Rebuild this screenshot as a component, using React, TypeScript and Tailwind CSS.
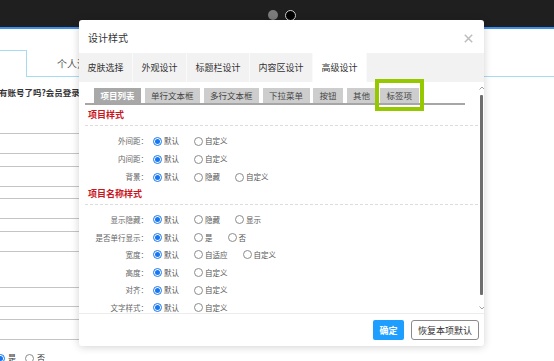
import type { ReactElement } from "react";

type Row = { label: string; opts: string[] };

const ITEM_ROWS: Row[] = [
  { label: "外间距：", opts: ["默认", "自定义"] },
  { label: "内间距：", opts: ["默认", "自定义"] },
  { label: "背景：", opts: ["默认", "隐藏", "自定义"] },
];

const NAME_ROWS: Row[] = [
  { label: "显示隐藏：", opts: ["默认", "隐藏", "显示"] },
  { label: "是否单行显示：", opts: ["默认", "是", "否"] },
  { label: "宽度：", opts: ["默认", "自适应", "自定义"] },
  { label: "高度：", opts: ["默认", "自定义"] },
  { label: "对齐：", opts: ["默认", "自定义"] },
  { label: "文字样式：", opts: ["默认", "自定义"] },
];

const TABS = [
  { name: "皮肤选择", w: "w-[54px]" },
  { name: "外观设计", w: "w-[54px]" },
  { name: "标题栏设计", w: "w-[63px]" },
  { name: "内容区设计", w: "w-[63px]" },
  { name: "高级设计", w: "w-[54px]", active: true },
];

const SUB_TABS = ["项目列表", "单行文本框", "多行文本框", "下拉菜单", "按钮", "其他", "标签项"];

function Radio({ on }: { on?: boolean }): ReactElement {
  if (on) {
    return (
      <span className="flex h-[9px] w-[9px] shrink-0 items-center justify-center rounded-full border border-[#1677f2] bg-white">
        <span className="h-[5px] w-[5px] rounded-full bg-[#1677f2]" />
      </span>
    );
  }
  return <span className="block h-[9px] w-[9px] shrink-0 rounded-full border border-[#8c8c8c] bg-white" />;
}

function OptionRow({ row, tall }: { row: Row; tall?: boolean }): ReactElement {
  return (
    <div className={`flex items-center ${tall ? "h-[18px]" : "h-[17.6px]"}`}>
      <span className="w-[69px] text-right text-[7.5px] leading-none text-[#666]">{row.label}</span>
      <div className="ml-[5px] flex items-center">
        {row.opts.map((o, i) => (
          <span key={o} className="mr-[15px] flex items-center">
            <Radio on={i === 0} />
            <span className="ml-[2px] text-[7.5px] leading-none text-[#555]">{o}</span>
          </span>
        ))}
      </div>
    </div>
  );
}

function SectionTitle({ text }: { text: string }): ReactElement {
  return (
    <div className="mx-[6px] border-b border-dashed border-[#dcdcdc] pb-[4px] pl-[3px]">
      <span className="block text-[9px] font-bold leading-[12px] text-[#c9151e]">{text}</span>
    </div>
  );
}

function Chevron({ up }: { up?: boolean }): ReactElement {
  return (
    <svg width="6" height="4" viewBox="0 0 6 4" className="mx-auto">
      <polyline
        points={up ? "0.5,3.5 3,1 5.5,3.5" : "0.5,0.5 3,3 5.5,0.5"}
        fill="none"
        stroke="#a0a0a0"
        strokeWidth="1"
      />
    </svg>
  );
}

function Modal(): ReactElement {
  return (
    <div className="absolute left-[79px] top-[20px] flex h-[326px] w-[405px] flex-col overflow-hidden rounded-[3px] bg-white shadow-[0_1px_8px_rgba(0,0,0,0.18)]">
      {/* header */}
      <div className="flex h-[33px] items-center justify-between pl-[9px] pr-[11px] pt-[3px]">
        <span className="text-[10px] leading-none text-[#333]">设计样式</span>
        <svg width="9" height="9" viewBox="0 0 9 9">
          <path d="M0.8 0.8 L8.2 8.2 M8.2 0.8 L0.8 8.2" stroke="#bdbdbd" strokeWidth="1.5" />
        </svg>
      </div>

      {/* main tabs */}
      <div className="flex h-[29px] bg-[#f2f2f2]">
        {TABS.map((t) => (
          <div
            key={t.name}
            className={`flex h-full items-center justify-center border-r border-[#fafafa] text-[9px] text-[#333] ${t.w} ${t.active ? "bg-white" : ""}`}
          >
            {t.name}
          </div>
        ))}
      </div>

      {/* body */}
      <div className="relative h-[231px] overflow-hidden">
        <div className="ml-[6px] mt-[6px] flex w-[380px] gap-[3.5px] border-b-2 border-[#a6a6a6] pl-[9px]">
          {SUB_TABS.map((s, i) => (
            <span
              key={s}
              className={`flex h-[15px] items-center whitespace-nowrap px-[6.5px] text-[8.5px] leading-none ${i === 0 ? "bg-[#a8a8a8] font-bold text-white" : "bg-[#cdcdcd] text-[#444]"}`}
            >
              {s}
            </span>
          ))}
        </div>

        <div className="mt-[4px]">
          <SectionTitle text="项目样式" />
          <div className="mt-[6px]">
            {ITEM_ROWS.map((r) => (
              <OptionRow key={r.label} row={r} tall />
            ))}
          </div>
        </div>

        <div className="mt-[2px]">
          <SectionTitle text="项目名称样式" />
          <div className="mt-[6px]">
            {NAME_ROWS.map((r) => (
              <OptionRow key={r.label} row={r} />
            ))}
          </div>
        </div>

        {/* scrollbar */}
        <div className="absolute bottom-[3px] right-0 top-[4px] flex w-[5px] flex-col">
          <Chevron up />
          <div className="mx-auto mt-[5px] h-[200px] w-[3.5px] rounded-[1px] bg-[#6e6e6e]" />
          <div className="mt-auto">
            <Chevron />
          </div>
        </div>
      </div>

      {/* footer */}
      <div className="flex flex-1 items-center justify-end gap-[7px] border-t border-[#ececec] pr-[5px]">
        <span className="flex h-[20px] items-center rounded-[2px] bg-[#1e9fff] px-[6.5px] text-[9px] font-bold leading-none text-white">
          确定
        </span>
        <span className="flex h-[20px] items-center rounded-[3px] border border-[#8a8a8a] px-[6px] text-[9px] leading-none text-[#333]">
          恢复本项默认
        </span>
      </div>
    </div>
  );
}

export default function App(): ReactElement {
  return (
    <div className="relative h-[361px] w-[554px] overflow-hidden bg-white font-['Noto_Sans_CJK_SC','Noto_Sans',sans-serif]">
      {/* top dark bar */}
      <div className="flex h-[27px] justify-center bg-[#1f1f1f] pl-[9px] pt-[10px]">
        <span className="h-[10px] w-[10px] rounded-full bg-[#7c7c7c]" />
        <span className="ml-[7px] h-[11px] w-[11px] rounded-full border border-[#cfcfcf] bg-black" />
      </div>
      <div className="h-[2px] bg-[#3f8ff0]" />

      {/* page tabs */}
      <div className="mt-[21px] flex h-[27px]">
        <div className="w-[27px] border-r border-t border-[#a6dcf2]" />
        <div className="flex flex-1 items-center border-b border-[#a6dcf2] pl-[30px] text-[10px] text-[#555]">
          <span className="w-[23px] overflow-hidden whitespace-nowrap">个人注册</span>
        </div>
      </div>

      <p className="-ml-[1px] mt-[9px] text-[8.5px] font-bold leading-[12px] text-[#333]">有账号了吗?会员登录</p>

      {/* form fields */}
      <div className="w-[350px]">
        <div className="mt-[35px] h-[21px] border-y border-[#c4c4c4]" />
        <div className="mt-[12px] h-[21px] border-y border-[#c4c4c4]" />
        <div className="mt-[11px] h-[21px] border-y border-[#c4c4c4]" />
        <div className="mt-[12px] h-[21px] border-y border-[#c4c4c4]" />
        <div className="mt-[35px] h-[20px] border-y border-[#c4c4c4]" />
        <div className="mt-[12px] h-[21px] border-y border-[#c4c4c4]" />
      </div>

      <div className="-ml-[4px] mt-[13px] flex h-[10px] items-center text-[8px] leading-none text-[#333]">
        <Radio on />
        <span className="ml-[3px]">是</span>
        <span className="ml-[9px] flex">
          <Radio />
        </span>
        <span className="ml-[3px]">否</span>
      </div>

      <Modal />

      {/* highlight annotation */}
      <div className="absolute left-[375px] top-[79px] h-[32px] w-[49px] border-[4px] border-[#96c800]" />
    </div>
  );
}
